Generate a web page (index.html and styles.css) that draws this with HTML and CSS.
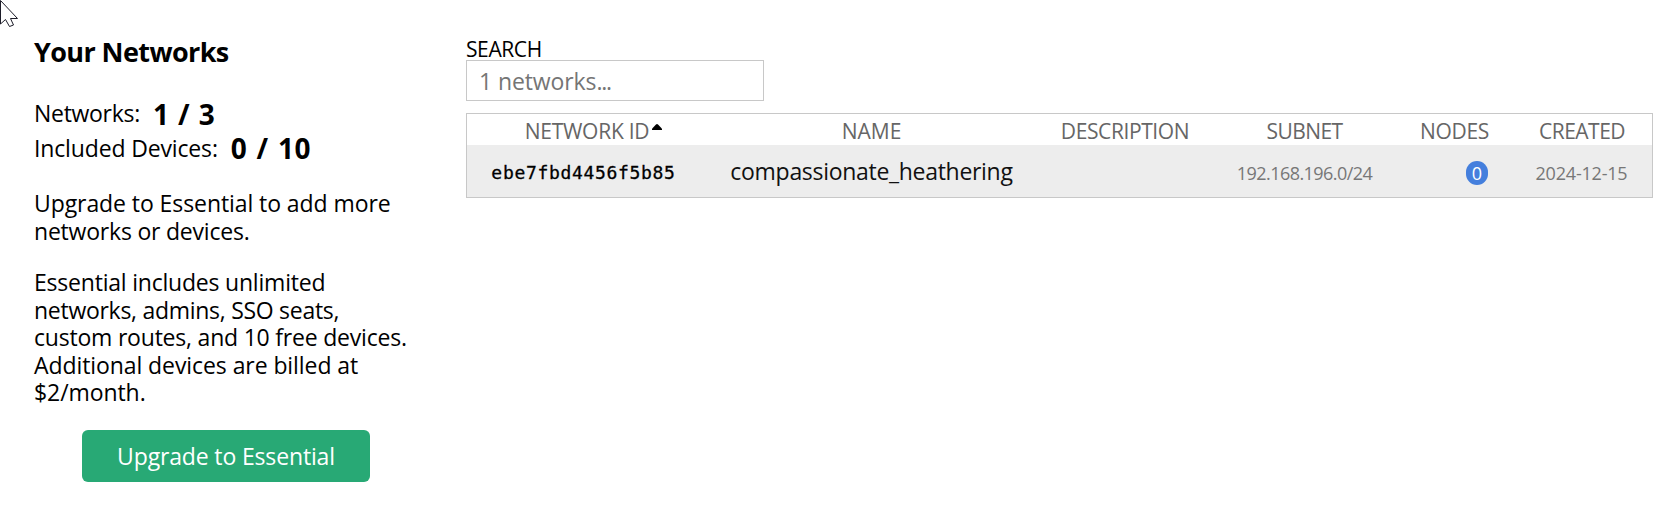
FILE: index.html
```
<!DOCTYPE html>
<html lang="en"><head><meta charset="utf-8"><title>Your Networks</title><link rel="stylesheet" href="styles.css"></head>
<body>
<svg class="cursor" viewBox="0 0 20 28"><path d="M.5 .5V24L5.5 19.5L9.5 26.5L13.5 25L10.5 18.5H17.5Z" fill="#fff" stroke="#1c1c28"/></svg>
<aside class="sidebar">
<h1 class="title">Your Networks</h1>
<div class="stat"><span class="stat-label">Networks:</span><span class="stat-value">1 / 3</span></div>
<div class="stat"><span class="stat-label devices">Included Devices:</span><span class="stat-value included">0 / 10</span></div>
<p class="note first"><span class="snug">Upgrade to Essential to add more</span> <span class="tight">networks or devices.</span></p>
<p class="note"><span class="tight">Essential includes unlimited</span> <span class="tighter">networks, admins, SSO seats,</span> <span class="tight">custom routes, and 10 free devices.</span> <span class="snug">Additional devices are billed at</span> <span class="snug">$2/month.</span></p>
<button class="upgrade">Upgrade to Essential</button>
</aside>
<main class="main">
<label class="search-label">SEARCH</label>
<div class="search">1 networks<span class="dots">...</span></div>
<div class="table">
<div class="row head"><span class="h-id">NETWORK ID<svg class="sort" viewBox="0 0 10 6"><path d="M0 6V4.8L4 .5Q5 -.3 6 .5L10 4.8V6Z"/></svg></span><span class="h-name">NAME</span><span class="h-desc">DESCRIPTION</span><span class="h-subnet">SUBNET</span><span class="h-nodes">NODES</span><span class="h-created">CREATED</span></div>
<div class="row item"><span class="id">ebe7fbd4456f5b85</span><span class="name">compassionate_heathering</span><span></span><span class="small subnet">192.168.196.0/24</span><span class="nodes"><span class="badge">0</span></span><span class="small date">2024-12-15</span></div>
</div>
</main>
</body></html>
```
FILE: styles.css
```
*{box-sizing:border-box}
body{margin:0;width:1679px;height:525px;background:#fff;color:#000;font-family:"Open Sans","Noto Sans",sans-serif;display:flex;font-size:23px}
.cursor{position:absolute;left:0;top:0;width:20px;height:28px}
.sidebar{width:466px;padding:34px 0 0 34px}
.title{margin:0 0 26px;font-size:27px;line-height:36px;letter-spacing:-.6px}
.stat{display:flex;gap:13px;height:35px;line-height:35px;letter-spacing:-.3px}
.stat .devices{letter-spacing:-.15px}
.stat-value{padding-top:1px;font-weight:700;font-size:28px;letter-spacing:.3px;word-spacing:1.3px}
.included{padding-top:0;letter-spacing:.6px}
.note{margin:0 0 24px}
.note span{display:block;height:27.5px;line-height:28px;white-space:nowrap}
.first{margin:23px 0 24.4px}
.snug{letter-spacing:-.08px}
.tight{letter-spacing:-.21px}
.tighter{letter-spacing:-.28px}
.upgrade{display:block;width:288px;height:52px;margin-left:48px;padding:0;border:0;border-radius:6px;background:#28a975;color:#fff;font:23px "Open Sans",sans-serif;letter-spacing:-.15px}
.main{width:1187px;padding-top:37px}
.search-label{display:block;height:23px;font-size:21px;line-height:24px;letter-spacing:-.4px}
.search{width:298px;height:41px;border:1px solid #c8c8c8;padding-left:12px;line-height:41px;color:#757575;margin-bottom:12px;letter-spacing:-.1px}
.dots{letter-spacing:-1.3px}
.table{border:1px solid #c8c8c8;height:85px}
.row{display:grid;grid-template-columns:235px 339px 168px 191px 109px 143px;text-align:center;white-space:nowrap}
.head{height:31px;line-height:35px;color:#666;font-size:21px}
.h-id{padding-left:18px;letter-spacing:-.27px}
.h-desc{letter-spacing:-.4px}
.h-subnet{letter-spacing:-.55px}
.h-nodes{letter-spacing:-.3px}
.h-created{padding-left:3px;letter-spacing:-.5px}
.sort{width:10px;height:6px;margin-left:3px;vertical-align:9px;fill:#000}
.item{height:52px;line-height:53px;background:#ededed}
.id{padding-right:2px;line-height:55px;font-family:"DejaVu Sans Mono",monospace;font-size:18px;letter-spacing:.68px;-webkit-text-stroke:.3px #000}
.name{color:#111;letter-spacing:-.3px}
.small{font-size:18px;color:#777;line-height:56px}
.subnet{letter-spacing:-.55px}
.date{padding-left:2px;letter-spacing:-.2px}
.nodes{display:flex;justify-content:flex-end;padding:16px 21px 0 0}
.badge{width:22px;height:24px;border-radius:11px;background:#447fdd;color:#fff;font-size:18px;line-height:24px}
```
